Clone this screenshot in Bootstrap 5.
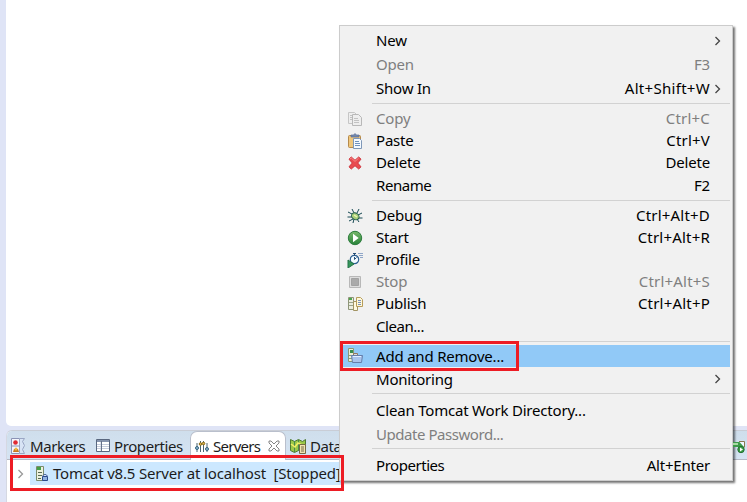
<!DOCTYPE html>
<html lang="en">
<head>
<meta charset="utf-8">
<meta name="viewport" content="width=device-width, initial-scale=1">
<title>Servers view</title>
<link href="https://cdn.jsdelivr.net/npm/bootstrap@5.3.0/dist/css/bootstrap.min.css" rel="stylesheet">
<style>
body{font-family:"Noto Sans","Open Sans",sans-serif;font-size:15px;line-height:22px;color:#000;background:#dfe4f6;width:747px;height:502px;overflow:hidden}
svg{flex:none}
.workbench{height:502px;padding-left:6px}
.editor-pane{height:426px;border-bottom-left-radius:5px}
.view-stack{margin-top:4px;height:72px;border-top:1px solid #c9cdd6;border-left:1px solid #d5d8e2;border-top-left-radius:6px;overflow:hidden}
.tab-strip{height:29px;background:linear-gradient(#cfdeec,#d5e4f3);border-bottom:1px solid #b4b9c6}
.view-tab{height:29px;color:#1c1c1c;letter-spacing:-.4px;white-space:nowrap}
.view-tab.current{background:#fff;border:1px solid #b9bfcc;border-bottom:0;border-radius:7px 7px 0 0}
.t1{width:85px;padding-left:4px}.t2{width:98px;padding-left:4px}.t3{width:96px;padding-left:4px;letter-spacing:-.75px}.t4{padding-left:4px}
.tree-row{height:23px;margin-top:2px;padding-left:10px}
.tree-label{background:#cce8ff;width:311px;height:23px;margin-left:6px;padding-left:5px;color:#1c1c1c;white-space:pre}
.server-name{letter-spacing:-.17px;padding-bottom:2px}
.ctx{position:absolute;left:339px;top:25px;width:394px;height:456px;background:#f1f1f1;border:1px solid #ccc;padding:3px 2px 0;box-shadow:2px 2px 2px rgba(0,0,0,.55)}
.entry{height:22px;padding-right:20px;white-space:nowrap;letter-spacing:-.2px}
.entry.tall{height:24px}
.entry.off{color:#7f7f7f}
.entry.hot{background:#91c9f7}
.entry .keys{letter-spacing:.2px}
.entry .keys-wide{letter-spacing:.3px}
.entry .snug{letter-spacing:-.45px}
.raised .entry span{padding-bottom:2px}
.glyph{width:34px;padding-left:5px;flex:none}
.glyph svg{display:block}
.rule{height:7px;padding:2px 0 0 30px}
.rule.short{height:6px}
.rule::before{content:"";display:block;height:1px;background:#d2d2d2}
.arrow{width:7px;margin:0 -11px 0 4px}
.frame{position:absolute;border:3px solid #ed1c24;z-index:5}
.frame-server{left:10px;top:455px;width:334px;height:36px}
.frame-add{left:340px;top:341px;width:179px;height:30px}
.toolbar-end{position:absolute;left:733px;top:439px}
</style>
<script src="https://cdn.jsdelivr.net/npm/bootstrap@5.3.0/dist/js/bootstrap.bundle.min.js"></script>
</head>
<body>
<div class="workbench d-flex flex-column">
  <div class="editor-pane bg-white flex-shrink-0"></div>
  <div class="view-stack bg-white">
    <div class="tab-strip d-flex">
      <div class="view-tab t1 d-flex align-items-center gap-1">
        <svg width="15" height="16" viewBox="0 0 15 16"><path d="M.5 .5h8v15h-8z" fill="#f3f5fb" stroke="#8b93b5"/><path d="M8.500 .5h5l-2 3 2 4-2 4 2 4h-5z" fill="#d8e4f5" stroke="#9aa6c4"/><circle cx="4.500" cy="4.500" r="2.300" fill="#e02a32"/><path d="M.5 8h8" stroke="#8b93b5"/><path d="M2 14h6l-1-3H3z" fill="#c77821"/><circle cx="5" cy="11" r="1.500" fill="#f0b942"/></svg>
        <span>Markers</span>
      </div>
      <div class="view-tab t2 d-flex align-items-center gap-1">
        <svg width="14" height="13" viewBox="0 0 14 13"><path d="M.5 .5h13v12H.5z" fill="#fff" stroke="#59677f"/><path d="M1 1h12v2H1z" fill="#8593ad"/><path d="M5 3v9M1 5.500h12M1 7.500h12M1 9.500h12" stroke="#c5ccdc" fill="none"/><path d="M5.500 2v10" stroke="#66728a"/></svg>
        <span>Properties</span>
      </div>
      <div class="view-tab current t3 d-flex align-items-center">
        <svg class="me-1" width="14" height="13" viewBox="0 0 14 13"><path d="M2 3v9M5.500 1v11M8.500 1v11M12 3v9" stroke="#4a6672"/><circle cx="2" cy="8" r="1.500" fill="#8fbad0" stroke="#34617e"/><circle cx="5.500" cy="4" r="1.300" fill="#e4be4c" stroke="#876718"/><circle cx="8.500" cy="3.500" r="1.300" fill="#e4be4c" stroke="#876718"/><circle cx="12" cy="9" r="1.500" fill="#8fbad0" stroke="#34617e"/></svg>
        <span>Servers</span>
        <svg class="ms-2" width="12" height="12" viewBox="0 0 12 12"><path d="M1 1h2l3 3 3-3h2v2L8 6l3 3v2H9L6 8l-3 3H1V9l3-3-3-3z" fill="#fff" stroke="#777" stroke-width=".9"/></svg>
      </div>
      <div class="view-tab t4 d-flex align-items-center gap-1">
        <svg width="16" height="16" viewBox="0 0 16 16"><path d="M.5 1.500l4 2 4-2 4 2 3-2v11l-3 2-4-2-4 2-4-2z" fill="#9bc849" stroke="#4d7832"/><path d="M4.500 3v11M8.500 2v11" stroke="#4a8b4a"/><path d="M1 6l4 3 3-4 4 2" fill="none" stroke="#f5ed67" stroke-width="1.500"/><path d="M9.500 6.500h6v9h-6z" fill="#f0e4b2" stroke="#766b45"/><path d="M11 9h3M11 11h3M11 13h3" stroke="#766b45"/></svg>
        <span>Data Source</span>
      </div>
    </div>
    <div class="tree-row d-flex align-items-center">
      <svg width="7" height="10" viewBox="0 0 7 10"><path d="M1.500 1l4 4-4 4" fill="none" stroke="#999" stroke-width="1.300"/></svg>
      <div class="tree-label d-flex align-items-center">
        <svg class="me-1" width="14" height="16" viewBox="0 0 14 16"><path d="M1.500 .5h7v14h-7z" fill="#edf1df" stroke="#7c8b6c"/><path d="M2 1h4v3H2z" fill="#43a047"/><path d="M3 6.500h4M3 9.500h4M3 12.500h3" stroke="#596a54"/><path d="M7.500 10.500h5v4h-5z" fill="#91b3e3" stroke="#2c4b8b"/><path d="M8 10c0-2 4-2 4 0" fill="#dfeaff" stroke="#2c4b8b"/></svg>
        <span class="server-name">Tomcat v8.5 Server at localhost  [Stopped]</span>
      </div>
    </div>
  </div>
  <div class="flex-grow-1"></div>
</div>

<div class="ctx">
  <div class="raised">
    <div class="entry tall d-flex align-items-center"><i class="glyph"></i><span>New</span><svg class="arrow ms-auto" height="10" viewBox="0 0 7 10"><path d="M1.500 1l4 4-4 4" fill="none" stroke="#444" stroke-width="1.300"/></svg></div>
    <div class="entry tall off d-flex align-items-center"><i class="glyph"></i><span>Open</span><span class="ms-auto">F3</span></div>
    <div class="entry tall d-flex align-items-center"><i class="glyph"></i><span>Show In</span><span class="keys-wide ms-auto">Alt+Shift+W</span><svg class="arrow" height="10" viewBox="0 0 7 10"><path d="M1.500 1l4 4-4 4" fill="none" stroke="#444" stroke-width="1.300"/></svg></div>
    <div class="rule"></div>
    <div class="entry off d-flex align-items-center"><i class="glyph"><svg width="16" height="16" viewBox="0 0 16 16"><path d="M1.500 1.500h6l2 2v9h-8z" fill="#eee" stroke="#c6c6c6"/><path d="M5.500 3.500h6l3 3v8h-9z" fill="#eee" stroke="#b8b8b8"/><path d="M7 7.500h4M7 9.500h5M7 11.500h5M3 4.500h2M3 6.500h2M3 8.500h2" stroke="#c2c2c2"/></svg></i><span>Copy</span><span class="keys ms-auto">Ctrl+C</span></div>
    <div class="entry d-flex align-items-center"><i class="glyph"><svg width="16" height="16" viewBox="0 0 16 16"><rect x="1.500" y="2.500" width="12" height="12" rx="1" fill="#efc77d" stroke="#b68a4a"/><path d="M4 4V2h2.500L8 .5 9.500 2H12v2z" fill="#7088ae" stroke="#5b6f95" stroke-width=".7"/><path d="M6.500 5.500h6l2 2v8h-8z" fill="#f5faff" stroke="#7f98b8"/><path d="M8 8.500h4M8 10.500h5M8 12.500h5" stroke="#6e91bd"/></svg></i><span>Paste</span><span class="keys ms-auto">Ctrl+V</span></div>
    <div class="entry d-flex align-items-center"><i class="glyph"><svg width="16" height="16" viewBox="0 0 16 16"><path d="M2 4.200L4.300 2 8 5.300 11.700 2 14 4.200 10.700 8 14 11.800 11.700 14 8 10.700 4.300 14 2 11.800 5.300 8z" fill="#e94b50" stroke="#cf343c" stroke-linejoin="round"/><path d="M3 4l1.300-1L8 6.400 11.700 3" fill="none" stroke="#f58a88"/></svg></i><span>Delete</span><span class="ms-auto">Delete</span></div>
    <div class="entry tall d-flex align-items-center"><i class="glyph"></i><span class="snug">Rename</span><span class="ms-auto">F2</span></div>
    <div class="rule"></div>
    <div class="entry d-flex align-items-center"><i class="glyph"><svg width="16" height="16" viewBox="0 0 16 16"><path d="M5 1l2 4M12 1l-2 4M1 4l4 2M15 5l-4 2M.5 9H5M15.500 10H11M2 13l4-2M6 15l1-4M12 14l-2-3" stroke="#164953" fill="none"/><ellipse cx="8.300" cy="8.300" rx="4" ry="3.200" transform="rotate(35 8.300 8.300)" fill="#a8cf79" stroke="#225d50"/><path d="M7 7l3 2" stroke="#eff6b6" stroke-width="1.500"/></svg></i><span>Debug</span><span class="keys ms-auto">Ctrl+Alt+D</span></div>
    <div class="entry d-flex align-items-center"><i class="glyph"><svg width="16" height="16" viewBox="0 0 16 16"><defs><linearGradient id="go" x2="0" y2="1"><stop stop-color="#79b96c"/><stop offset="1" stop-color="#278239"/></linearGradient></defs><circle cx="8" cy="8" r="6.700" fill="url(#go)" stroke="#2c7c3d"/><path d="M6 3.700v8.600L11.700 8z" fill="#fff"/></svg></i><span>Start</span><span class="keys ms-auto">Ctrl+Alt+R</span></div>
    <div class="entry d-flex align-items-center"><i class="glyph"><svg width="16" height="16" viewBox="0 0 16 16"><circle cx="7.500" cy="7.500" r="4.200" fill="#f3fbff" stroke="#2b5e91" stroke-width="1.200"/><path d="M6 1.500h3M7.500 1.500v2M7.500 7.500V5M7.500 7.500l2-2" stroke="#254e77"/><path d="M11 1.500h5M12 3.500h4M13 5.500h3" stroke="#8fa6c8"/><path d="M1 8l6 4-6 4z" fill="#35965a" stroke="#237448"/></svg></i><span>Profile</span></div>
    <div class="entry off d-flex align-items-center"><i class="glyph"><svg width="16" height="16" viewBox="0 0 16 16"><path d="M2.500 2.500h11v11h-11z" fill="#ddd" stroke="#b8b8b8"/><path d="M4.500 4.500h7v7h-7z" fill="#aaa" stroke="#a2a2a2"/></svg></i><span>Stop</span><span class="keys ms-auto">Ctrl+Alt+S</span></div>
    <div class="entry d-flex align-items-center"><i class="glyph"><svg width="16" height="16" viewBox="0 0 16 16"><path d="M1.500 1.500h5v12h-5z" fill="#eceddf" stroke="#8e9578"/><path d="M2 2h3v2H2z" fill="#4da54f"/><path d="M2 6.500h4M2 9.500h4" stroke="#9ba38b"/><path d="M6.500 5.500h4v9h-4z" fill="#fffae0" stroke="#a39463"/><path d="M9.500 1.500h4l2 2v7h-6z" fill="#fff8d8" stroke="#b69c5b"/><path d="M11 4.500h3M11 6.500h3M11 8.500h3" stroke="#7e91bb"/></svg></i><span>Publish</span><span class="keys ms-auto">Ctrl+Alt+P</span></div>
    <div class="entry tall d-flex align-items-center"><i class="glyph"></i><span class="snug">Clean...</span></div>
  </div>
  <div class="rule short"></div>
  <div class="entry hot d-flex align-items-center"><i class="glyph"><svg width="16" height="16" viewBox="0 0 16 16"><path d="M1.500 .5h5v13h-5z" fill="#edf0d9" stroke="#899875"/><path d="M3 2h3v3H3z" fill="#388d4c"/><path d="M2 7.500h4M2 10.500h3" stroke="#8b987d"/><path d="M6.500 7V5.500h4V7" fill="#ddd" stroke="#927861"/><path d="M4.500 7.500h11l-1 7h-9z" fill="#a9c4ec" stroke="#657eaa"/><path d="M6 8.500h8" stroke="#e4efff"/></svg></i><span>Add and Remove...</span></div>
  <div class="entry tall d-flex align-items-center"><i class="glyph"></i><span>Monitoring</span><svg class="arrow ms-auto" height="10" viewBox="0 0 7 10"><path d="M1.500 1l4 4-4 4" fill="none" stroke="#444" stroke-width="1.300"/></svg></div>
  <div class="rule"></div>
  <div class="entry tall d-flex align-items-center"><i class="glyph"></i><span>Clean Tomcat Work Directory...</span></div>
  <div class="entry tall off d-flex align-items-center"><i class="glyph"></i><span class="snug">Update Password...</span></div>
  <div class="rule"></div>
  <div class="entry tall d-flex align-items-center"><i class="glyph"></i><span class="snug">Properties</span><span class="ms-auto">Alt+Enter</span></div>
</div>
<div class="toolbar-end"><svg class="d-block" width="14" height="15" viewBox="0 0 14 15"><path d="M0 3h11v5H0z" fill="#3d9b49"/><path d="M0 4h5v2H0z" fill="#a8d8a4"/><path d="M6 2.500h5.500v6" fill="#eff7ff" stroke="#8a7950"/><circle cx="8" cy="10.500" r="3.200" fill="#3b9b44" stroke="#237231"/><path d="M7 8.500v4l3-2z" fill="#fff"/></svg></div>
<div class="frame frame-server"></div>
<div class="frame frame-add"></div>
</body>
</html>
